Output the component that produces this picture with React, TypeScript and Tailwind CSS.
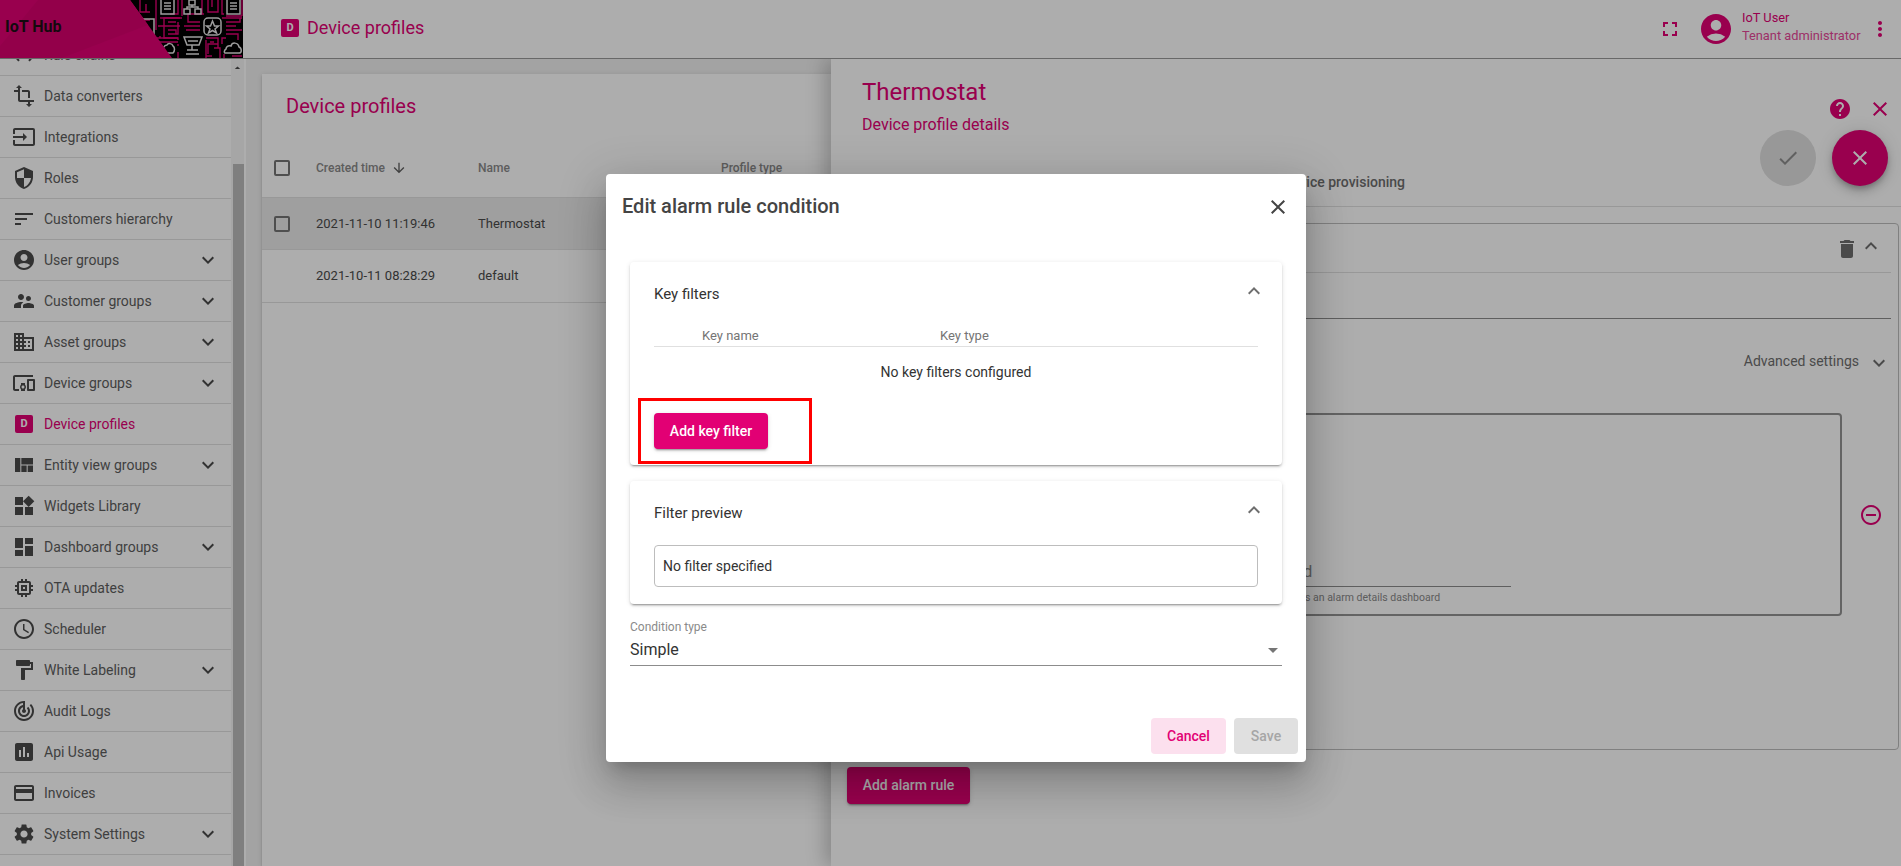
import React from "react";
import {
  MdAccountCircle,
  MdArrowDownward,
  MdArrowDropDown,
  MdArrowDropUp,
  MdAssessment,
  MdCheck,
  MdClose,
  MdCreditCard,
  MdDashboard,
  MdDelete,
  MdDevicesOther,
  MdDomain,
  MdExpandLess,
  MdExpandMore,
  MdFormatPaint,
  MdFullscreen,
  MdHelp,
  MdInput,
  MdMemory,
  MdMoreVert,
  MdRemoveCircleOutline,
  MdSchedule,
  MdSecurity,
  MdSettings,
  MdSettingsEthernet,
  MdSort,
  MdSupervisorAccount,
  MdTrackChanges,
  MdTransform,
  MdViewQuilt,
  MdWidgets,
} from "react-icons/md";

const CARD_SHADOW =
  "shadow-[0_3px_1px_-2px_rgba(0,0,0,0.2),0_2px_2px_0_rgba(0,0,0,0.14),0_1px_5px_0_rgba(0,0,0,0.12)]";

const menu = [
  { label: "Rule chains", icon: MdSettingsEthernet },
  { label: "Data converters", icon: MdTransform },
  { label: "Integrations", icon: MdInput },
  { label: "Roles", icon: MdSecurity },
  { label: "Customers hierarchy", icon: MdSort },
  { label: "User groups", icon: MdAccountCircle, more: true },
  { label: "Customer groups", icon: MdSupervisorAccount, more: true },
  { label: "Asset groups", icon: MdDomain, more: true },
  { label: "Device groups", icon: MdDevicesOther, more: true },
  { label: "Device profiles", active: true },
  { label: "Entity view groups", icon: MdViewQuilt, more: true },
  { label: "Widgets Library", icon: MdWidgets },
  { label: "Dashboard groups", icon: MdDashboard, more: true },
  { label: "OTA updates", icon: MdMemory },
  { label: "Scheduler", icon: MdSchedule },
  { label: "White Labeling", icon: MdFormatPaint, more: true },
  { label: "Audit Logs", icon: MdTrackChanges },
  { label: "Api Usage", icon: MdAssessment },
  { label: "Invoices", icon: MdCreditCard },
  { label: "System Settings", icon: MdSettings, more: true },
];

const maze = [
  "M140 0v12h10M156 0v30M146 4v8M150 20h-8v16h12M128 0l16 20",
  "M178 0v14h-8M180 18h-16v20h14M178 22v12h-10",
  "M208 0v12h10v-12M212 0v7M204 14h-16v8h12M184 26h16M186 30h14",
  "M180 26h-22M160 26h10",
  "M222 18h20M226 22h14v-4M226 26h10M226 30h16M226 34h12v6M226 38h-4v6",
  "M206 38h12v6h-10v10M210 42h4M206 40v18M214 48h6v10M218 44v4",
  "M146 38h32v2M150 42h28M178 44v2M160 38v-2",
  "M178 52v6M224 54v4M232 56h10M206 56h6",
  "M222 0v14h2M226 16h16",
  "M182 0v16M202 0v14M242 0v16M160 18h22M168 22h8M168 30h8v4",
];

function Logo() {
  return (
    <div className="relative h-[58px] w-[243px] shrink-0 overflow-hidden bg-black">
      <svg width="243" height="58" viewBox="0 0 243 58" className="block">
        <g fill="none" stroke="#e20074" strokeWidth="1.4">
          {maze.map((d) => (
            <path key={d} d={d} />
          ))}
        </g>
        <g fill="none" stroke="#e8e8e8" strokeWidth="1.5">
          <path d="M161 0v14h13v-14M164 3h7M164 6h7M164 9h7" />
          <path d="M227 0v14h13v-14M230 3h7M230 6h7M230 9h7" />
          <path d="M189 0h6v5h-6zM184 9h6v5h-6zM195 9h6v5h-6zM192 5v2M187 9v-2h11v2" />
          <rect x="204" y="18" width="17" height="17" rx="4" />
          <path d="M212.500 21l2 5h4l-3.500 3 1.500 4-4-2.500-4 2.500 1.500-4-3.500-3h4z" />
          <path d="M184 37h18l-3 8h-12zM188 41h10M192 45v5M187 50h11M186 54h13" />
          <path d="M225 53h14c3 0 3-5 0-6-1-5-7-5-8-1-3-1-5 1-5 3-2 1-2 4-1 4z" />
          <path d="M163 53h10c2-2 2-6 0-7-1-3-5-3-6-1-3 0-5 4-4 8z" />
          <path d="M143 19h11v17" />
        </g>
        <path d="M0 0H130L172 58H0Z" fill="#e20074" />
        <path d="M38 0H130L148 25L62 58H0V46Z" fill="#d9006e" />
      </svg>
      <span className="absolute left-[5px] top-[16px] text-[16px] leading-[22px] font-bold text-[#1c1016]">
        IoT Hub
      </span>
    </div>
  );
}

function ProfileBadge() {
  return (
    <span className="flex h-[18px] w-[18px] items-center justify-center rounded-[2px] bg-[#e20074] text-[11px] font-bold text-white">
      D
    </span>
  );
}

function Sidebar() {
  return (
    <aside className="flex w-[246px] shrink-0 bg-white pr-[2px]">
      <nav className="-mt-[24px] w-[231px] shrink-0">
        {menu.map((item) => {
          const Icon = item.icon;
          return (
            <div
              key={item.label}
              className="flex h-[41px] items-center border-b border-[#e0e0e0] pr-[11px] pl-3"
            >
              <span className="flex h-6 w-6 items-center justify-center text-[#4a4a4a]">
                {Icon ? <Icon size={24} /> : <ProfileBadge />}
              </span>
              <span
                className={`ml-2 flex-1 text-[14px] ${
                  item.active ? "text-[#e20074]" : "text-[#5e5e5e]"
                }`}
              >
                {item.label}
              </span>
              {item.more && <MdExpandMore size={24} className="text-[#4a4a4a]" />}
            </div>
          );
        })}
      </nav>
      <div className="flex w-[13px] flex-col bg-[#f5f5f5]">
        <div className="flex h-[17px] items-center justify-center text-[#4a4a4a]">
          <MdArrowDropUp size={18} />
        </div>
        <div className="h-[88px]" />
        <div className="ml-[2px] flex-1 bg-[#bcbcbc]" />
      </div>
    </aside>
  );
}

function Checkbox() {
  return <span className="block h-[16px] w-[16px] rounded-[2px] border-2 border-[#757575]" />;
}

function DeviceProfilesList() {
  return (
    <section className={`ml-4 mt-[15px] w-[569px] shrink-0 bg-white ${CARD_SHADOW}`}>
      <h2 className="pl-[24px] pt-[18px] text-[20px] leading-[28px] text-[#e20074]">
        Device profiles
      </h2>
      <div className="mt-[16px] flex h-[62px] items-center border-b border-[#e0e0e0] pt-[2px] text-[12px] font-medium text-[#8a8a8a]">
        <span className="ml-[12px] w-[42px]">
          <Checkbox />
        </span>
        <span className="flex w-[162px] items-center">
          Created time
          <MdArrowDownward size={16} className="ml-[6px] text-[#5e5e5e]" />
        </span>
        <span className="w-[243px]">Name</span>
        <span>Profile type</span>
      </div>
      <div className="flex h-[52px] items-center border-b border-[#e0e0e0] bg-[#ebebeb] text-[13px] text-[#4b4b4b]">
        <span className="ml-[12px] w-[42px]">
          <Checkbox />
        </span>
        <span className="w-[162px]">2021-11-10 11:19:46</span>
        <span>Thermostat</span>
      </div>
      <div className="flex h-[53px] items-center border-b border-[#e0e0e0] text-[13px] text-[#4b4b4b]">
        <span className="ml-[54px] w-[162px]">2021-10-11 08:28:29</span>
        <span>default</span>
      </div>
    </section>
  );
}

function ProfileDetails() {
  return (
    <section className="relative z-10 flex-1 bg-white shadow-[-6px_0_18px_rgba(0,0,0,0.22)]">
      <div className="flex h-[99px] justify-between pl-[31px] pr-[9px] pt-[17px]">
        <div>
          <h1 className="text-[24px] leading-[32px] text-[#e20074]">Thermostat</h1>
          <p className="mt-[5px] text-[16px] leading-[24px] text-[#e20074]">
            Device profile details
          </p>
        </div>
        <div className="mt-[21px] flex h-6 gap-4 text-[#e20074]">
          <MdHelp size={24} />
          <MdClose size={24} />
        </div>
      </div>

      {/* floating save / cancel */}
      <div className="absolute right-[13px] top-[71px] flex gap-4">
        <button className="flex h-14 w-14 items-center justify-center rounded-full bg-[#e0e0e0] text-[#8e8e8e]">
          <MdCheck size={24} />
        </button>
        <button className="flex h-14 w-14 items-center justify-center rounded-full bg-[#e20074] text-white shadow-[0_3px_5px_-1px_rgba(0,0,0,0.2),0_6px_10px_0_rgba(0,0,0,0.14),0_1px_18px_0_rgba(0,0,0,0.12)]">
          <MdClose size={24} />
        </button>
      </div>

      <div className="flex h-[49px] items-center justify-end gap-12 border-b border-[#e0e0e0] pr-[496px] text-[14px] font-medium text-[#6e6e6e]">
        <span>Alarm rules</span>
        <span>Device provisioning</span>
      </div>

      <div className="ml-4 mr-[2px] mt-4 h-[527px] rounded-[4px] border border-[#bdbdbd]">
        <div className="mx-[7px] flex h-[49px] items-center justify-end border-b border-[#e0e0e0] pr-[8px] text-[#6e6e6e]">
          <MdDelete size={24} className="mt-[1px]" />
          <MdExpandLess size={24} className="-mt-[5px]" />
        </div>
        <div className="mx-[7px] h-[46px] border-b border-[#8c8c8c]" />
        <div className="mx-[7px] mt-[29px] flex h-[26px] items-center justify-end text-[14px] text-[#6e6e6e]">
          Advanced settings
          <MdExpandMore size={24} className="ml-[8px] mt-[3px]" />
        </div>
        <div className="mr-[15px] mt-[39px] flex items-center">
          <div className="flex h-[203px] flex-1 flex-col justify-end rounded-[4px] border-2 border-[#949494] pb-[10px] pl-[321px]">
            <div className="w-[340px] border-b border-[#8c8c8c] pb-[3px] pl-[13px] text-[16px] leading-[22px] text-[#8a8a8a]">
              Mobile dashboard
            </div>
            <p className="mt-[5px] text-[10.5px] leading-[12px] text-[#8a8a8a]">
              Used by mobile application as an alarm details dashboard
            </p>
          </div>
          <MdRemoveCircleOutline size={24} className="ml-[17px] shrink-0 text-[#e20074]" />
        </div>
      </div>

      <button
        className={`ml-4 mt-[17px] h-[37px] w-[123px] rounded-[4px] bg-[#e20074] text-[14px] font-medium text-white ${CARD_SHADOW}`}
      >
        Add alarm rule
      </button>
    </section>
  );
}

function ConditionDialog() {
  return (
    <div
      role="dialog"
      className="absolute left-[606px] top-[174px] z-40 h-[588px] w-[700px] rounded-[4px] bg-white shadow-[0_11px_15px_-7px_rgba(0,0,0,0.2),0_24px_38px_3px_rgba(0,0,0,0.14),0_9px_46px_8px_rgba(0,0,0,0.12)]"
    >
      <div className="flex h-[66px] items-center justify-between pl-4 pr-4">
        <h2 className="-mt-[2px] text-[20px] font-medium text-[#444444]">
          Edit alarm rule condition
        </h2>
        <MdClose size={24} className="text-[#444444]" />
      </div>

      <div className="px-6 pt-[22px]">
        <div className={`relative h-[203px] rounded-[4px] bg-white px-6 ${CARD_SHADOW}`}>
          <div className="flex h-[64px] items-center justify-between text-[15px] text-[#333333]">
            Key filters
            <MdExpandLess size={24} className="-mr-2 -mt-[6px] text-[#6e6e6e]" />
          </div>
          <div className="flex h-[21px] items-center border-b border-[#e0e0e0] pl-12 text-[13px] text-[#757575]">
            <span className="w-[238px]">Key name</span>
            <span>Key type</span>
          </div>
          <div className="flex h-[50px] items-center justify-center text-[14px] text-[#333333]">
            No key filters configured
          </div>
          <button
            className={`mt-4 h-9 w-[114px] rounded-[4px] bg-[#e20074] text-[14px] font-medium text-white ${CARD_SHADOW}`}
          >
            Add key filter
          </button>
          {/* annotation drawn over the screenshot */}
          <div className="absolute left-2 top-[136px] h-[66px] w-[174px] border-[3px] border-[#ff0000]" />
        </div>

        <div className={`mt-4 h-[123px] rounded-[4px] bg-white px-6 ${CARD_SHADOW}`}>
          <div className="flex h-[64px] items-center justify-between text-[15px] text-[#333333]">
            Filter preview
            <MdExpandLess size={24} className="-mr-2 -mt-[6px] text-[#6e6e6e]" />
          </div>
          <div className="flex h-[42px] items-center rounded-[4px] border border-[#bdbdbd] pl-[8px] text-[14px] text-[#333333]">
            No filter specified
          </div>
        </div>

        <div className="mt-4 border-b border-[#8c8c8c]">
          <label className="block text-[12px] leading-[14px] text-[#8a8a8a]">Condition type</label>
          <div className="flex h-[31px] items-center justify-between text-[16px] text-[#333333]">
            Simple
            <MdArrowDropDown size={24} className="-mr-[3px] text-[#757575]" />
          </div>
        </div>
      </div>

      <div className="mt-[52px] flex justify-end gap-2 pr-2">
        <button className="h-9 w-[75px] rounded-[4px] bg-[#fce0ee] text-[14px] font-medium text-[#e20074]">
          Cancel
        </button>
        <button className="h-9 w-16 rounded-[4px] bg-[#e0e0e0] text-[14px] font-medium text-[#a6a6a6]">
          Save
        </button>
      </div>
    </div>
  );
}

export default function App() {
  return (
    <div className="relative flex h-[866px] w-[1901px] flex-col overflow-hidden bg-white font-[Roboto,sans-serif]">
      <header className="relative z-20 flex h-[59px] shrink-0 items-start border-b border-[#9a9a9a] bg-white">
        <Logo />
        <div className="ml-[38px] mt-[18px] flex items-center gap-2 text-[18px] leading-[20px] text-[#e20074]">
          <ProfileBadge />
          <span>Device profiles</span>
        </div>
        <div className="ml-auto flex h-[58px] items-center pr-[9px]">
          <MdFullscreen size={24} className="text-[#e20074]" />
          <MdAccountCircle size={36} className="ml-[16px] text-[#e20074]" />
          <div className="-mt-[4px] ml-[8px] w-[118px] whitespace-nowrap text-[12.8px] leading-[18px]">
            <div className="text-[#e20074]">IoT User</div>
            <div className="text-[#e8479a]">Tenant administrator</div>
          </div>
          <MdMoreVert size={24} className="ml-[8px] text-[#e20074]" />
        </div>
      </header>

      <div className="flex min-h-0 flex-1 overflow-hidden">
        <Sidebar />
        <main className="flex flex-1 bg-[#f0f0f0]">
          <DeviceProfilesList />
          <ProfileDetails />
        </main>
      </div>

      <div className="absolute inset-0 z-30 bg-black/[0.32]" />
      <ConditionDialog />
    </div>
  );
}
